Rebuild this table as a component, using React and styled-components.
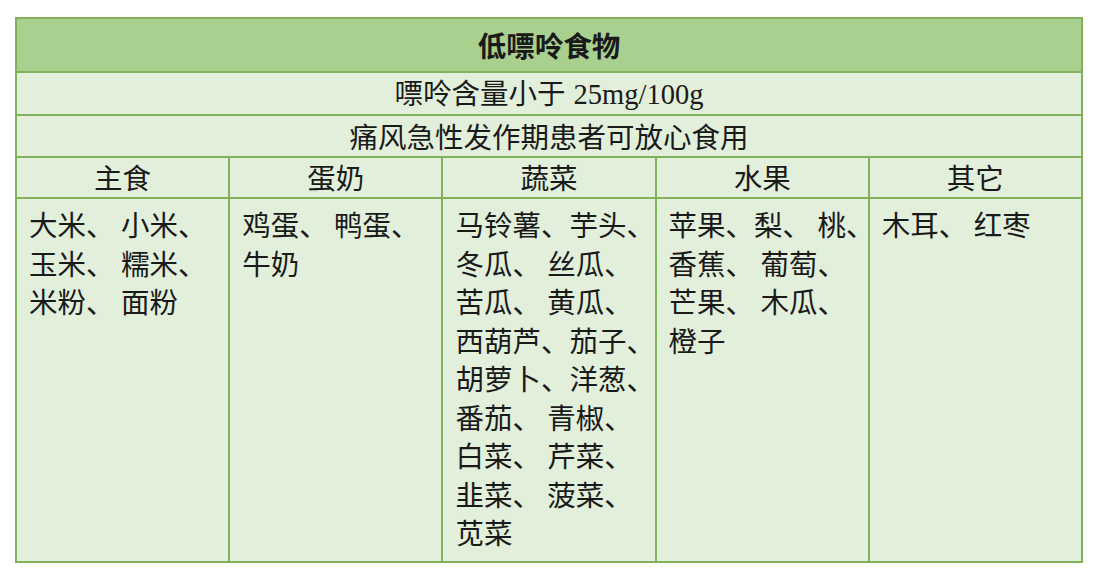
import React from "react";
import styled, { createGlobalStyle } from "styled-components";

const GlobalStyle = createGlobalStyle`
  html, body {
    margin: 0;
    padding: 0;
    background: #ffffff;
  }
  body {
    font-family: "Noto Sans CJK SC", "Liberation Serif", serif;
    color: #1a1a1a;
  }
`;

const Page = styled.div`
  padding: 17px 16px 0 15px;
`;

const Table = styled.table`
  width: 1068px;
  border-collapse: collapse;
  table-layout: fixed;
  border: 2px solid #7fb25a;
`;

const Cell = styled.td`
  border: 2px solid #7fb25a;
  background: ${(p) => (p.$title ? "#a9d08e" : "#e2efda")};
  height: ${(p) => p.$h}px;
  padding: 0;
  text-align: center;
  vertical-align: middle;
  font-size: 28.5px;
  font-weight: ${(p) => (p.$title ? 700 : 400)};
  line-height: 1;
`;

const BodyCell = styled.td`
  border: 2px solid #7fb25a;
  background: #e2efda;
  height: 356px;
  padding: 6px 8px 0 12px;
  vertical-align: top;
  font-size: 28.5px;
`;

const Line = styled.div`
  height: 38.5px;
  line-height: 38.5px;
  white-space: nowrap;
`;

const Latin = styled.span`
  font-family: "Liberation Serif", serif;
  margin-left: 8px;
`;

const columns = [
  { head: "主食", lines: ["大米、 小米、", "玉米、 糯米、", "米粉、 面粉"] },
  { head: "蛋奶", lines: ["鸡蛋、 鸭蛋、", "牛奶"] },
  {
    head: "蔬菜",
    lines: [
      "马铃薯、芋头、",
      "冬瓜、 丝瓜、",
      "苦瓜、 黄瓜、",
      "西葫芦、茄子、",
      "胡萝卜、洋葱、",
      "番茄、 青椒、",
      "白菜、 芹菜、",
      "韭菜、 菠菜、",
      "苋菜",
    ],
  },
  { head: "水果", lines: ["苹果、梨、 桃、", "香蕉、 葡萄、", "芒果、 木瓜、", "橙子"] },
  { head: "其它", lines: ["木耳、 红枣"] },
];

export default function App() {
  return (
    <Page>
      <GlobalStyle />
      <Table>
        <tbody>
          <tr>
            <Cell $title $h={52} colSpan={5}>低嘌呤食物</Cell>
          </tr>
          <tr>
            <Cell $h={41} colSpan={5}>
              嘌呤含量小于<Latin>25mg/100g</Latin>
            </Cell>
          </tr>
          <tr>
            <Cell $h={40} colSpan={5}>痛风急性发作期患者可放心食用</Cell>
          </tr>
          <tr>
            {columns.map((c) => (
              <Cell key={c.head} $h={39}>{c.head}</Cell>
            ))}
          </tr>
          <tr>
            {columns.map((c) => (
              <BodyCell key={c.head}>
                {c.lines.map((l) => (
                  <Line key={l}>{l}</Line>
                ))}
              </BodyCell>
            ))}
          </tr>
        </tbody>
      </Table>
    </Page>
  );
}
